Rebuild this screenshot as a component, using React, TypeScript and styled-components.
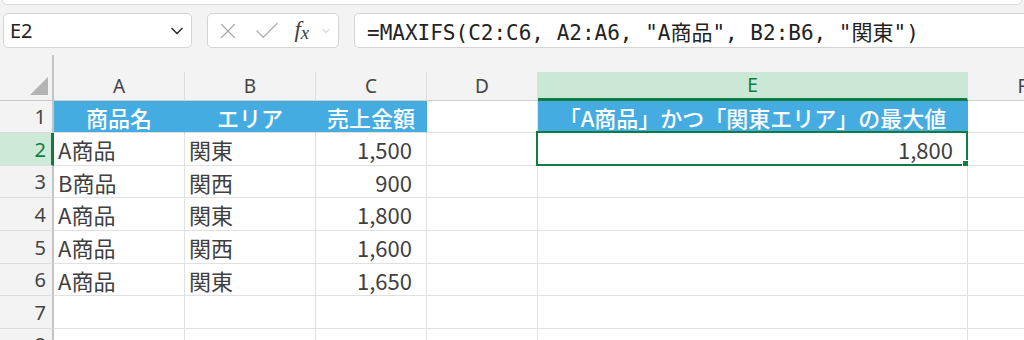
import styled, { createGlobalStyle } from 'styled-components';
import { ChevronDown, X, Check } from 'lucide-react';

const GREEN = '#107c41';
const BLUE = '#45ace2';
const GRID = '#e1e1e1';

type Align = 'left' | 'center' | 'right';

type Row = {
  n: number;
  header?: boolean;
  cells: string[];
};

const columns = ['A', 'B', 'C', 'D', 'E', 'F'];
const aligns: Align[] = ['left', 'left', 'right', 'left', 'right', 'left'];

const rows: Row[] = [
  {
    n: 1,
    header: true,
    cells: ['商品名', 'エリア', '売上金額', '', '「A商品」かつ「関東エリア」の最大値', ''],
  },
  { n: 2, cells: ['A商品', '関東', '1,500', '', '1,800', ''] },
  { n: 3, cells: ['B商品', '関西', '900', '', '', ''] },
  { n: 4, cells: ['A商品', '関東', '1,800', '', '', ''] },
  { n: 5, cells: ['A商品', '関西', '1,600', '', '', ''] },
  { n: 6, cells: ['A商品', '関東', '1,650', '', '', ''] },
  { n: 7, cells: ['', '', '', '', '', ''] },
  { n: 8, cells: ['', '', '', '', '', ''] },
];

const GlobalStyle = createGlobalStyle`
  html, body {
    margin: 0;
    background: #f3f3f3;
    overflow: hidden;
  }
`;

export default function App() {
  return (
    <Page>
      <GlobalStyle />
      <RibbonEdge />
      <FormulaRow>
        <NameBox>
          <span>E2</span>
          <ChevronDown size={20} strokeWidth={2} color='#333' />
        </NameBox>
        <FuncBox>
          <X size={26} strokeWidth={1.1} color='#a8a8a8' />
          <Check size={30} strokeWidth={1.1} color='#b0b0b0' />
          <Fx>
            f<sub>x</sub>
          </Fx>
          <ChevronDown size={12} strokeWidth={1.5} color='#aaa' />
        </FuncBox>
        <FormulaBox>=MAXIFS(C2:C6, A2:A6, "A商品", B2:B6, "関東")</FormulaBox>
      </FormulaRow>

      <Sheet>
        <Corner />
        <TopGap />
        {columns.map((c) => (
          <ColumnHeader key={c} $active={c === 'E'}>
            {c}
          </ColumnHeader>
        ))}
        {rows.map((r) => (
          <RowGroup key={r.n} row={r} />
        ))}
      </Sheet>
    </Page>
  );
}

const RowGroup = ({ row }: { row: Row }) => (
  <>
    <RowHeader $active={row.n === 2}>{row.n}</RowHeader>
    {row.cells.map((text, i) => {
      const filled = !!row.header && text !== '';
      const selected = row.n === 2 && columns[i] === 'E';
      return (
        <Cell
          key={i}
          $align={filled ? 'center' : aligns[i]}
          $filled={filled}
        >
          {text}
          {selected && (
            <Selection>
              <FillHandle />
            </Selection>
          )}
        </Cell>
      );
    })}
  </>
);

const Page = styled.div`
  width: 1024px;
  height: 340px;
  overflow: hidden;
  background: #f3f3f3;
  font-family: 'Noto Sans', 'Noto Sans CJK JP', sans-serif;
`;

const RibbonEdge = styled.div`
  height: 5px;
  margin: 0 2px;
  background: #fff;
  border: 1px solid #dadada;
  border-top: none;
  border-radius: 0 0 7px 7px;
  box-sizing: border-box;
`;

const FormulaRow = styled.div`
  display: flex;
  gap: 15px;
  height: 35px;
  margin: 8px 0 0 3px;
`;

const Box = styled.div`
  display: flex;
  align-items: center;
  box-sizing: border-box;
  height: 35px;
  background: #fff;
  border: 1px solid #d4d4d4;
  border-radius: 5px;
`;

const NameBox = styled(Box)`
  width: 189px;
  padding: 0 4px 0 6px;
  justify-content: space-between;
  font-size: 20px;
  color: #222;
`;

const FuncBox = styled(Box)`
  width: 132px;
  padding: 0 6px 0 7px;
  justify-content: space-between;
`;

const Fx = styled.span`
  font-family: 'Liberation Serif', serif;
  font-style: italic;
  font-size: 23px;
  color: #404040;
  margin-left: 2px;

  sub {
    font-size: 19px;
    vertical-align: -2px;
  }
`;

const FormulaBox = styled(Box)`
  flex: 1;
  padding-left: 12px;
  border-right: none;
  border-radius: 5px 0 0 5px;
  font-family: 'DejaVu Sans Mono', 'Noto Sans CJK JP', monospace;
  font-size: 21px;
  color: #222;
  white-space: pre;
`;

const Sheet = styled.div`
  display: grid;
  grid-template-columns: 54px 131px 131px 111px 111px 430px 110px;
  grid-template-rows: 17px 29px 32px 33px 32px 33px 33px 32px 33px 32px;
  margin-top: 7px;
  width: 1078px;
`;

const Corner = styled.div`
  grid-row: span 2;
  position: relative;
  border-right: 2px solid #c4c4c4;
  border-bottom: 1px solid #c8c8c8;

  &::after {
    content: '';
    position: absolute;
    right: 4px;
    bottom: 5px;
    border-style: solid;
    border-width: 0 0 18px 18px;
    border-color: transparent transparent #b4b4b4 transparent;
  }
`;

const TopGap = styled.div`
  grid-column: 2 / -1;
`;

const ColumnHeader = styled.div<{ $active?: boolean }>`
  display: flex;
  align-items: center;
  justify-content: center;
  box-sizing: border-box;
  font-size: 19px;
  color: ${(p) => (p.$active ? GREEN : '#444')};
  background: ${(p) => (p.$active ? '#cae8d5' : 'transparent')};
  border-right: 1px solid ${(p) => (p.$active ? '#cae8d5' : '#dedede')};
  border-bottom: ${(p) => (p.$active ? `3px solid ${GREEN}` : '1px solid #cfcfcf')};
`;

const RowHeader = styled.div<{ $active?: boolean }>`
  display: flex;
  align-items: center;
  justify-content: flex-end;
  box-sizing: border-box;
  padding-right: ${(p) => (p.$active ? '5px' : '6px')};
  font-size: 20px;
  color: ${(p) => (p.$active ? GREEN : '#444')};
  background: ${(p) => (p.$active ? '#cde9d7' : 'transparent')};
  border-right: ${(p) => (p.$active ? `3px solid ${GREEN}` : '2px solid #c4c4c4')};
  border-bottom: 1px solid #dcdcdc;
`;

const Cell = styled.div<{ $align: Align; $filled?: boolean }>`
  position: relative;
  display: flex;
  align-items: center;
  justify-content: ${(p) =>
    p.$align === 'left' ? 'flex-start' : p.$align === 'right' ? 'flex-end' : 'center'};
  box-sizing: border-box;
  padding: ${(p) => (p.$align === 'right' ? '0 14px 0 4px' : '0 4px')};
  font-family: 'Noto Sans CJK JP', sans-serif;
  font-size: 22px;
  font-weight: ${(p) => (p.$filled ? 500 : 400)};
  color: ${(p) => (p.$filled ? '#fff' : '#404040')};
  white-space: nowrap;
  background: ${(p) => (p.$filled ? BLUE : '#fff')};
  border-right: 1px solid ${(p) => (p.$filled ? BLUE : GRID)};
  border-bottom: 1px solid ${GRID};
`;

const Selection = styled.div`
  position: absolute;
  inset: -2px -1px -1px -2px;
  border: 2px solid ${GREEN};
  pointer-events: none;
`;

const FillHandle = styled.div`
  position: absolute;
  right: -5px;
  bottom: -5px;
  width: 7px;
  height: 7px;
  background: ${GREEN};
  border: 1px solid #fff;
`;
